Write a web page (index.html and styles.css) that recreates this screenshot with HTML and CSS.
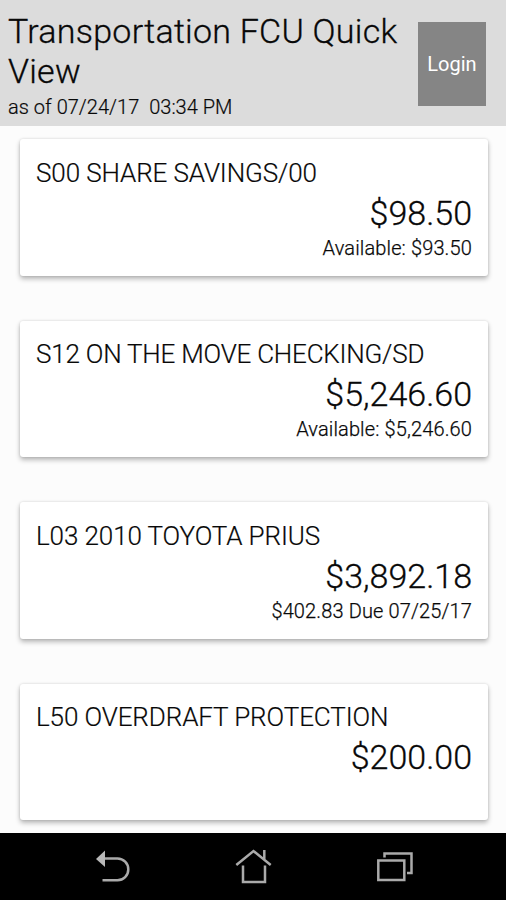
FILE: index.html
```html
<!DOCTYPE html>
<html lang="en">
<head>
<meta charset="utf-8">
<title>Quick View</title>
<link rel="stylesheet" href="styles.css">
</head>
<body>
<header class="header">
  <div class="heading">
    <h1 class="title">Transportation FCU Quick<br>View</h1>
    <p class="stamp">as of 07/24/17&nbsp; 03:34 PM</p>
  </div>
  <button class="login">Login</button>
</header>
<main class="accounts">
  <section class="card"><h2 class="name">S00 SHARE SAVINGS/00</h2><p class="amount">$98.50</p><p class="detail">Available: $93.50</p></section>
  <section class="card"><h2 class="name name-long">S12 ON THE MOVE CHECKING/SD</h2><p class="amount">$5,246.60</p><p class="detail">Available: $5,246.60</p></section>
  <section class="card"><h2 class="name">L03 2010 TOYOTA PRIUS</h2><p class="amount">$3,892.18</p><p class="detail">$402.83 Due 07/25/17</p></section>
  <section class="card"><h2 class="name">L50 OVERDRAFT PROTECTION</h2><p class="amount">$200.00</p></section>
</main>
<nav class="navbar">
  <svg class="icon" viewBox="92 845 40 40"><path d="M104 858.500H117.500a10.800 10.900 0 0 1 0 21.800H102.500"/><path class="solid" d="M96 859l9-8.500v16.500z"/></svg>
  <svg class="icon" viewBox="233 845 40 40"><path d="M236.300 865l17.200-14 17.200 14M264.300 850v10M243 865.500v16.500h22v-16.500"/></svg>
  <svg class="icon" viewBox="374 845 40 40"><path d="M378.300 860.500h26v19.500h-26zM384.500 857.500v-4h27v19.500h-4.500"/></svg>
</nav>
</body>
</html>
```
FILE: styles.css
```css
* { box-sizing: border-box; }
body { margin: 0; width: 506px; height: 900px; overflow: hidden; display: flex; flex-direction: column; background: #fcfcfc; color: #080808; font-family: Roboto, sans-serif; font-weight: 300; }
h1, h2, p { margin: 0; font-weight: 300; }
.header { height: 126px; flex: none; background: #dcdcdc; display: flex; justify-content: space-between; padding: 11px 20px 0 8px; }
.title { font-size: 34px; line-height: 40px; letter-spacing: 0.250px; white-space: nowrap; -webkit-text-stroke: 0.300px; }
.stamp { font-size: 20px; line-height: 33px; letter-spacing: 0.030px; white-space: pre; -webkit-text-stroke: 0.200px; }
.login { width: 68px; height: 84px; margin: 11px 0 0; padding: 0; border: 0; background: #858585; color: #fff; font: 20px Roboto, sans-serif; }
.accounts { flex: 1; min-height: 0; padding: 13px 18px 0 20px; display: flex; flex-direction: column; gap: 45px; overflow: hidden; }
.card { height: 136.500px; flex: none; background: #fff; border-radius: 3px; padding: 18.500px 16px 0; box-shadow: 0 3px 5px #0004, 0 0 3px #0002; }
.name { font-size: 26px; line-height: 31px; letter-spacing: -0.100px; white-space: nowrap; -webkit-text-stroke: 0.200px; }
.name-long { letter-spacing: -0.210px; }
.amount { font-size: 34px; line-height: 48px; text-align: right; -webkit-text-stroke: 0.300px; }
.detail { font-size: 20px; line-height: 23px; letter-spacing: 0.130px; text-align: right; -webkit-text-stroke: 0.250px; }
.navbar { height: 67px; flex: none; background: #000; display: flex; justify-content: center; gap: 101px; padding-top: 12px; }
.icon { width: 40px; height: 40px; fill: none; stroke: #aaa; stroke-width: 2.5; }
.solid { fill: #b8b8b8; stroke: none; }
```
